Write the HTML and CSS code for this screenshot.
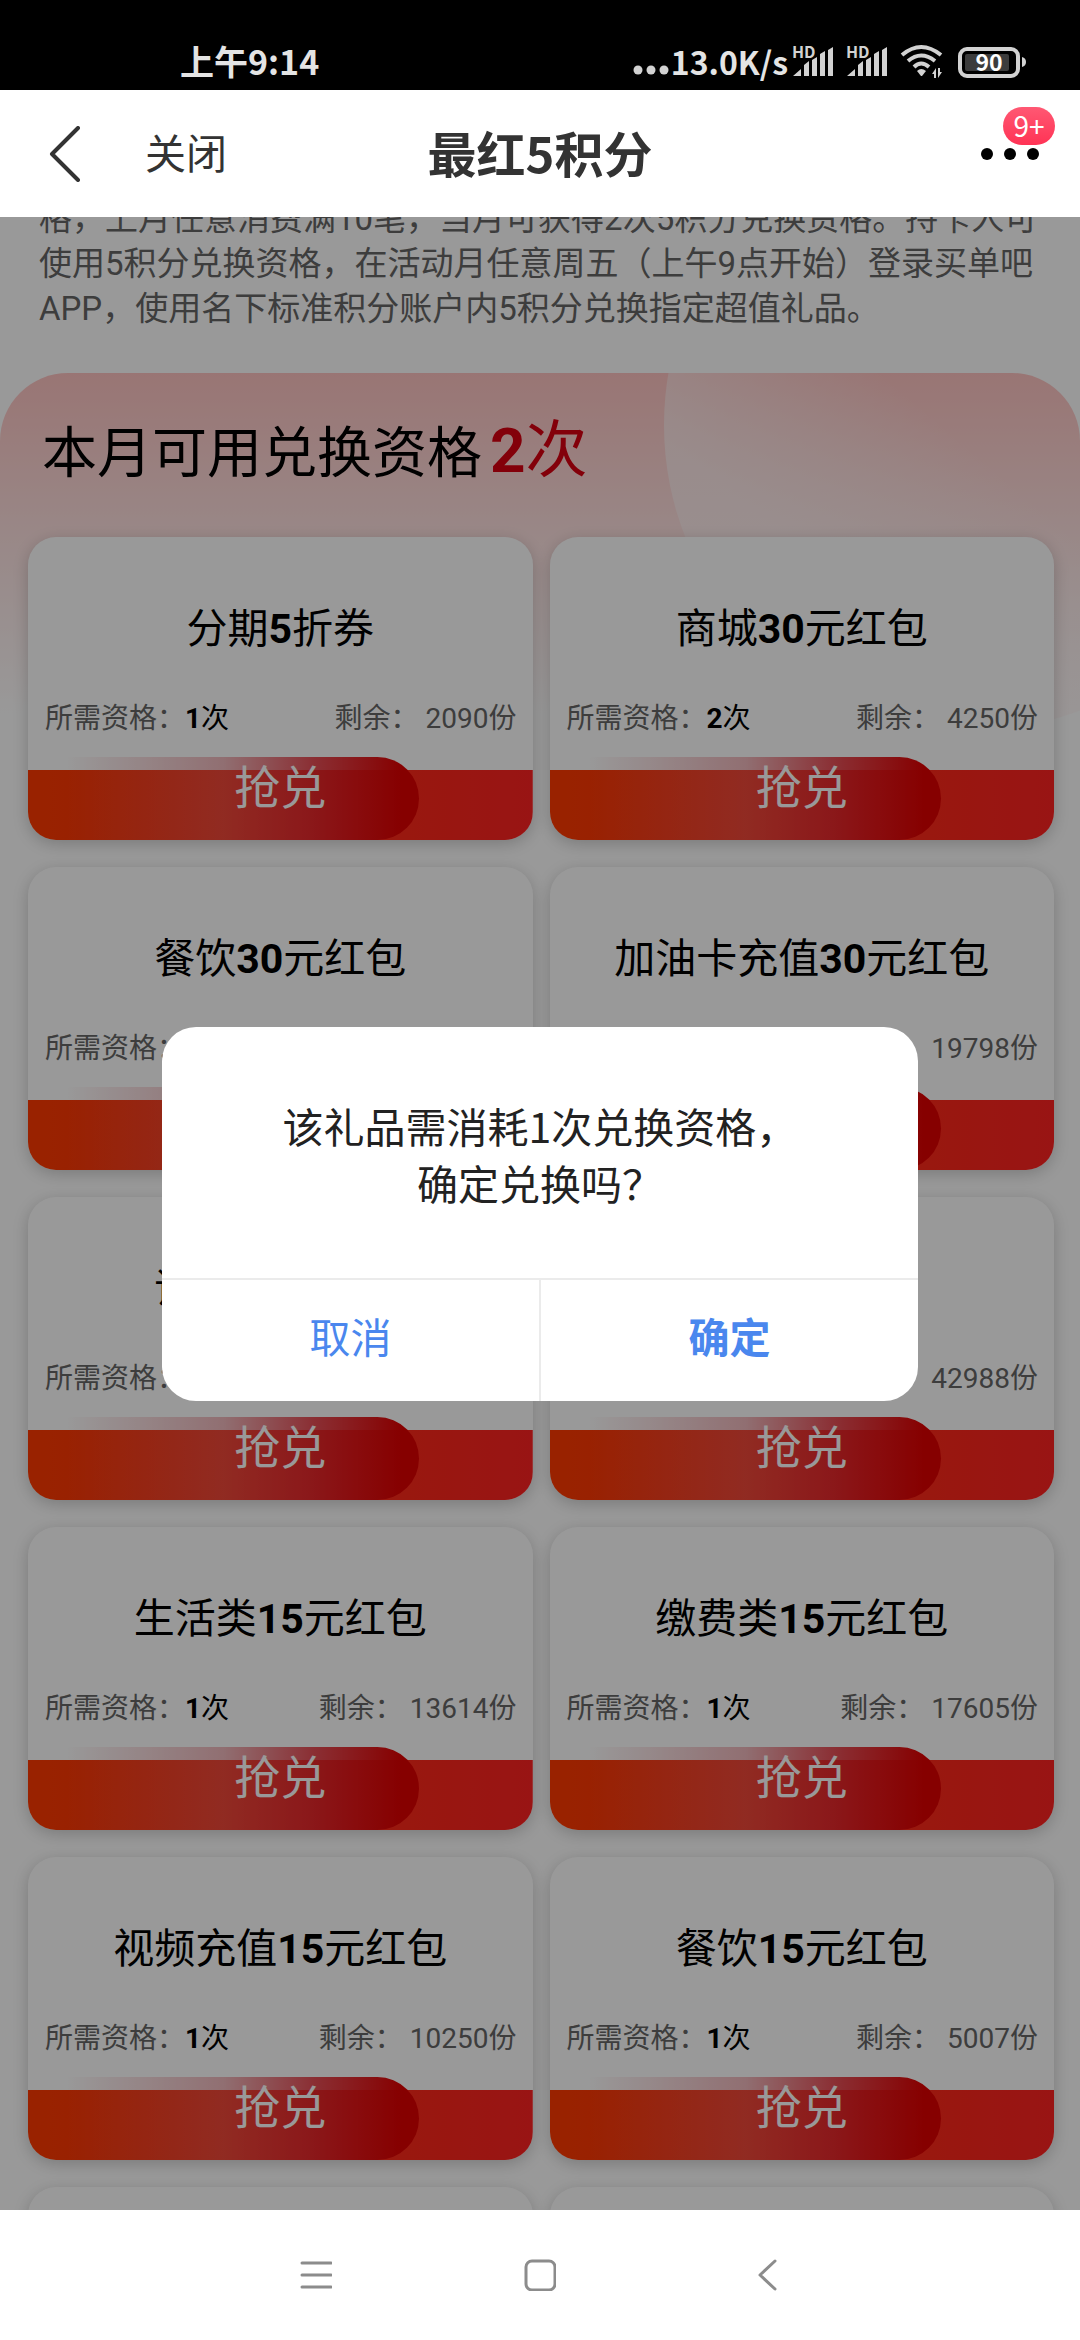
FILE: index.html
```html
<!DOCTYPE html>
<html lang="zh-CN">
<head>
  <meta charset="UTF-8" />
  <meta name="viewport" content="width=device-width, initial-scale=1.0" />
  <title>最红5积分</title>
  <link rel="stylesheet" href="styles.css">
</head>
<body>
  <!-- System status bar -->
  <div class="status-bar">
    <span class="status-time">上午9:14</span>
    <div class="status-right">
      <svg class="status-dots" width="38" height="32" viewBox="0 0 38 32">
        <circle cx="5" cy="24" r="4.5"/><circle cx="18" cy="24" r="4.5"/><circle cx="31" cy="24" r="4.5"/>
      </svg>
      <span class="status-speed">13.0K/s</span>
      <svg class="status-signal" width="44" height="32" viewBox="0 0 44 32">
        <text x="0" y="12" class="hd">HD</text>
        <path d="M1 30l8-7v7zM12 19l5-4v15h-5zM20 14l5-3v19h-5zM28 8l5-3v25h-5zM36 4l5-3v29h-5z"/>
      </svg>
      <svg class="status-signal" width="44" height="32" viewBox="0 0 44 32">
        <text x="0" y="12" class="hd">HD</text>
        <path d="M1 30l8-7v7zM12 19l5-4v15h-5zM20 14l5-3v19h-5zM28 8l5-3v25h-5zM36 4l5-3v29h-5z"/>
      </svg>
      <svg class="status-wifi" width="44" height="34" viewBox="0 0 44 34">
        <g fill="none" stroke="#d2d2d2" stroke-width="4">
          <path d="M2 11Q21-5 41 11"/>
          <path d="M8 17Q21 6 35 17"/>
          <path d="M14 23Q21 16 29 23"/>
        </g>
        <path d="M17 27q4-4 9 0l-4 5h-1z"/>
        <path d="M36 24v10h-2v-4h-2zM38 34V24h2v4h2z"/>
      </svg>
      <svg class="status-battery" width="70" height="32" viewBox="0 0 70 32">
        <rect x="2" y="3" width="58" height="27" rx="7" fill="none" stroke="#d2d2d2" stroke-width="4"/>
        <rect x="7" y="8" width="44" height="17" rx="2" fill="#3c3c3c"/>
        <path d="M64 11q4 1 4 5t-4 5z"/>
        <text x="31" y="25" text-anchor="middle" class="level">90</text>
      </svg>
    </div>
  </div>

  <header class="nav-bar">
    <button class="nav-back" aria-label="返回">
      <svg width="32" height="56" viewBox="0 0 32 56"><path d="M29 2L3 28l26 26" fill="none" stroke="#333" stroke-width="4" stroke-linecap="round" stroke-linejoin="round"/></svg>
    </button>
    <button class="nav-close">关闭</button>
    <h1>最红5积分</h1>
    <button class="nav-more" aria-label="更多">
      <svg width="60" height="14" viewBox="0 0 60 14"><circle cx="7" cy="7" r="6"/><circle cx="30" cy="7" r="6"/><circle cx="53" cy="7" r="6"/></svg>
      <span class="badge">9+</span>
    </button>
  </header>

  <main class="page">
    <p class="rules">格，上月任意消费满10笔，当月可获得2次5积分兑换资格。持卡人可使用5积分兑换资格，在活动月任意周五（上午9点开始）登录买单吧APP，使用名下标准积分账户内5积分兑换指定超值礼品。</p>

    <section class="panel">
      <h2>本月可用兑换资格<span class="count"><b>2</b>次</span></h2>

      <div class="gift-grid">
        <article class="gift-card">
          <h3>分期<b>5</b>折券</h3>
          <div class="gift-meta"><span>所需资格：<em><b>1</b>次</em></span><span>剩余： 2090份</span></div>
          <button class="gift-btn"><span>抢兑</span></button>
        </article>
        <article class="gift-card">
          <h3>商城<b>30</b>元红包</h3>
          <div class="gift-meta"><span>所需资格：<em><b>2</b>次</em></span><span>剩余： 4250份</span></div>
          <button class="gift-btn"><span>抢兑</span></button>
        </article>
        <article class="gift-card">
          <h3>餐饮<b>30</b>元红包</h3>
          <div class="gift-meta"><span>所需资格：</span></div>
          <button class="gift-btn" aria-label="抢兑"></button>
        </article>
        <article class="gift-card">
          <h3>加油卡充值<b>30</b>元红包</h3>
          <div class="gift-meta"><span></span><span>19798份</span></div>
          <button class="gift-btn" aria-label="抢兑"></button>
        </article>
        <article class="gift-card">
          <h3>话费<b>30</b>元红包</h3>
          <div class="gift-meta"><span>所需资格：</span></div>
          <button class="gift-btn"><span>抢兑</span></button>
        </article>
        <article class="gift-card">
          <h3></h3>
          <div class="gift-meta"><span></span><span>42988份</span></div>
          <button class="gift-btn"><span>抢兑</span></button>
        </article>
        <article class="gift-card">
          <h3>生活类<b>15</b>元红包</h3>
          <div class="gift-meta"><span>所需资格：<em><b>1</b>次</em></span><span>剩余： 13614份</span></div>
          <button class="gift-btn"><span>抢兑</span></button>
        </article>
        <article class="gift-card">
          <h3>缴费类<b>15</b>元红包</h3>
          <div class="gift-meta"><span>所需资格：<em><b>1</b>次</em></span><span>剩余： 17605份</span></div>
          <button class="gift-btn"><span>抢兑</span></button>
        </article>
        <article class="gift-card">
          <h3>视频充值<b>15</b>元红包</h3>
          <div class="gift-meta"><span>所需资格：<em><b>1</b>次</em></span><span>剩余： 10250份</span></div>
          <button class="gift-btn"><span>抢兑</span></button>
        </article>
        <article class="gift-card">
          <h3>餐饮<b>15</b>元红包</h3>
          <div class="gift-meta"><span>所需资格：<em><b>1</b>次</em></span><span>剩余： 5007份</span></div>
          <button class="gift-btn"><span>抢兑</span></button>
        </article>
        <article class="gift-card"></article>
        <article class="gift-card"></article>
      </div>
    </section>

    <!-- Confirm dialog -->
    <div class="mask">
      <div class="dialog" role="dialog" aria-modal="true">
        <p class="dialog-text">该礼品需消耗1次兑换资格，<br>确定兑换吗？</p>
        <div class="dialog-actions">
          <button>取消</button>
          <button class="confirm">确定</button>
        </div>
      </div>
    </div>
  </main>

  <!-- System navigation keys -->
  <nav class="system-nav">
    <button aria-label="菜单">
      <svg width="32" height="32" viewBox="0 0 32 32"><path d="M2 4h29M2 16h29M2 28h29"/></svg>
    </button>
    <button aria-label="主页">
      <svg width="32" height="32" viewBox="0 0 32 32"><rect x="2" y="2" width="29" height="29" rx="6"/></svg>
    </button>
    <button aria-label="返回">
      <svg width="32" height="32" viewBox="0 0 32 32"><path d="M27 2L12 16l15 14"/></svg>
    </button>
  </nav>
</body>
</html>
```

FILE: styles.css
```css
/* Reset & Base */
* {
  margin: 0;
  padding: 0;
  box-sizing: border-box;
}

body {
  display: flex;
  flex-direction: column;
  height: 100vh;
  overflow: hidden;
  background: #fff;
  color: #000;
  font-family: Roboto, 'Noto Sans CJK SC', sans-serif;
}

button {
  border: none;
  background: none;
  font: inherit;
  color: inherit;
  cursor: pointer;
}

svg {
  display: block;
}

/* Status bar */
.status-bar {
  display: flex;
  flex: none;
  justify-content: space-between;
  align-items: flex-end;
  height: 90px;
  padding: 0 52px 12px 180px;
  background: #000;
  color: #e4e4e4;
  font-family: 'Noto Sans CJK SC', sans-serif;
  font-size: 34px;
  font-weight: 700;
  line-height: 34px;
}

.status-right {
  display: flex;
  align-items: flex-end;
}

.status-right svg {
  fill: #d2d2d2;
  overflow: visible;
}

.status-speed {
  margin-right: 4px;
  font-size: 32px;
}

.status-signal {
  margin-right: 10px;
}

.status-wifi {
  margin-right: 14px;
}

.hd {
  font-size: 16px;
  font-weight: 700;
}

.level {
  font-size: 23px;
  font-weight: 700;
  fill: #fff;
}

/* Navigation bar */
.nav-bar {
  position: relative;
  display: flex;
  flex: none;
  align-items: center;
  height: 127px;
  padding: 0 40px 0 49px;
  background: #fff;
  color: #333;
  font-family: 'Noto Sans CJK SC', sans-serif;
}

.nav-close {
  margin-left: 64px;
  padding-bottom: 5px;
  font-size: 41px;
}

.nav-bar h1 {
  position: absolute;
  left: 50%;
  transform: translateX(-50%);
  padding-bottom: 5px;
  font-size: 49px;
}

.nav-more {
  position: relative;
  margin-left: auto;
}

.badge {
  position: absolute;
  right: -15px;
  bottom: 16px;
  width: 52px;
  height: 38px;
  border-radius: 19px;
  background: linear-gradient(#ff5873, #ff3355);
  color: #fff;
  font-size: 28px;
  line-height: 36px;
}

/* Page content */
.page {
  position: relative;
  flex: 1;
  min-height: 0;
  overflow: hidden;
}

.rules {
  margin-top: -21px;
  padding: 0 39px;
  color: #666;
  font-size: 33px;
  line-height: 45px;
}

.panel {
  position: relative;
  isolation: isolate;
  margin-top: 42px;
  padding: 0 26px 0 28px;
  border-radius: 68px 68px 0 0;
  background: linear-gradient(#ffc4c2, #ffe3e2 165px, #fff 340px);
  overflow: hidden;
}

/* Pale circle behind the heading */
.panel::before {
  content: '';
  position: absolute;
  z-index: -1;
  top: -254px;
  right: -196px;
  width: 612px;
  height: 612px;
  border-radius: 50%;
  background: linear-gradient(40deg, rgba(255, 242, 242, 0.7) 26%, rgba(255, 242, 242, 0) 48%);
}

.panel h2 {
  padding: 31px 0 0 14px;
  height: 164px;
  font-size: 55px;
  font-weight: 400;
  line-height: 94px;
}

.count {
  margin-left: 8px;
  color: #db0011;
  font-size: 62px;
}

.gift-grid {
  display: grid;
  grid-template-columns: 1fr 1fr;
  gap: 27px 17px;
}

.gift-card {
  display: flex;
  flex-direction: column;
  height: 303px;
  border-radius: 28px;
  background: #fff;
  box-shadow: 0 4px 16px rgba(0, 0, 0, 0.2);
  overflow: hidden;
}

.gift-card h3 {
  height: 154px;
  padding-top: 32px;
  font-size: 41px;
  font-weight: 400;
  line-height: 120px;
  text-align: center;
}

.gift-meta {
  display: flex;
  flex: 1;
  justify-content: space-between;
  padding: 0 16px 0 17px;
  color: #666;
  font-size: 28px;
  line-height: 56px;
}

.gift-meta em {
  color: #000;
  font-style: normal;
}

.gift-btn {
  position: relative;
  flex: none;
  height: 83px;
  background: linear-gradient(to right, #ff3a00, #ff2222) bottom / 100% 70px no-repeat;
  color: #fff;
  font-size: 46px;
  line-height: 62px;
}

/* Glossy pill that rises above the red bar */
.gift-btn::before {
  content: '';
  position: absolute;
  top: 0;
  bottom: 0;
  left: 0;
  width: 391px;
  border-radius: 0 42px 42px 0;
  background: linear-gradient(to right, rgba(225, 120, 120, 0) 10%, rgba(225, 100, 110, 0.45) 50%, rgba(226, 40, 50, 0.8) 72%, #e00000 96%);
}

.gift-btn span {
  position: relative;
  display: block;
  height: 83px;
}

/* Dialog */
.mask {
  position: absolute;
  inset: 0;
  display: flex;
  align-items: center;
  justify-content: center;
  background: rgba(0, 0, 0, 0.4);
}

.dialog {
  width: 70%;
  border-radius: 34px;
  background: #fff;
  color: #222;
  font-family: 'Noto Sans CJK SC', sans-serif;
  font-size: 41px;
  overflow: hidden;
}

.dialog-text {
  padding: 70px 40px 67px;
  line-height: 57px;
  text-align: center;
}

.dialog-actions {
  display: flex;
  border-top: 2px solid #ebebeb;
}

.dialog-actions button {
  flex: 1;
  height: 121px;
  padding-bottom: 10px;
  color: #4a87ee;
}

.dialog-actions .confirm {
  border-left: 2px solid #ebebeb;
  font-weight: 700;
}

/* System navigation keys */
.system-nav {
  display: flex;
  flex: none;
  align-items: center;
  justify-content: center;
  gap: 192px;
  height: 130px;
  background: #fff;
}

.system-nav svg {
  fill: none;
  stroke: #8c8c8c;
  stroke-width: 3;
  stroke-linecap: round;
  stroke-linejoin: round;
}
```
